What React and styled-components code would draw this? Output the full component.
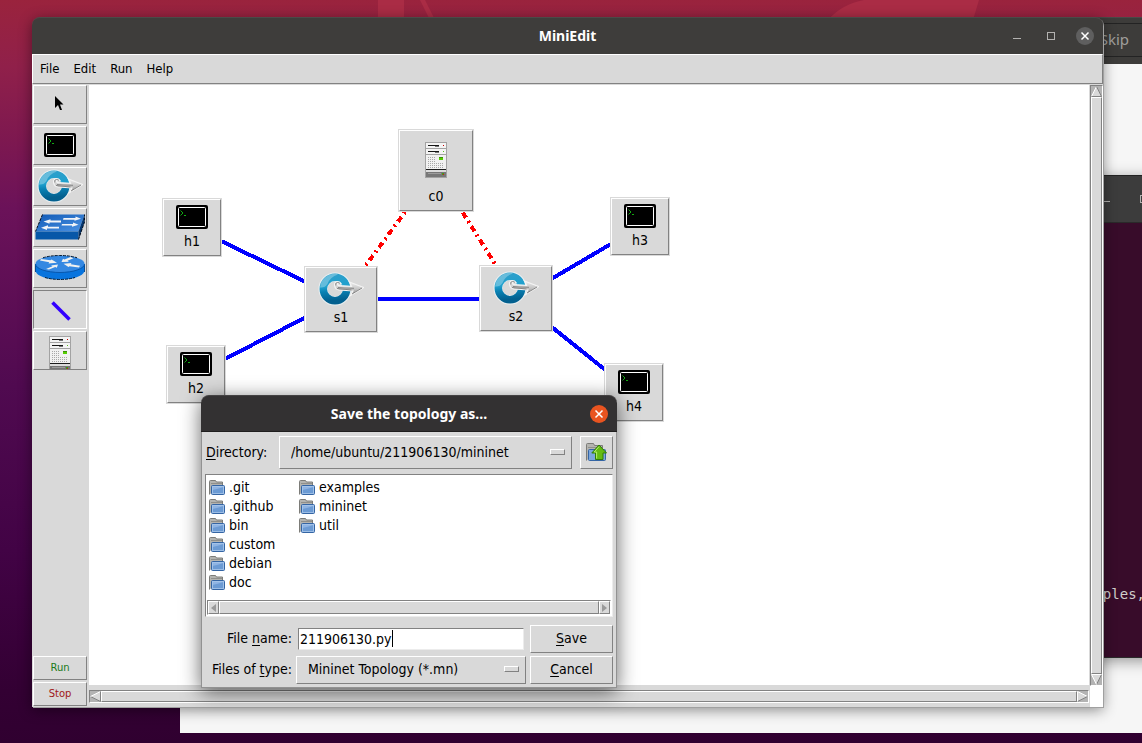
import React from "react";
import styled, { createGlobalStyle, css } from "styled-components";

const face = "#d9d9d9";
const dark = "#828282";
const light = "#ffffff";
const ui = `"DejaVu Sans Condensed", "DejaVu Sans", sans-serif`;
const titleFont = `"Noto Sans", "Open Sans", sans-serif`;

const GlobalStyle = createGlobalStyle`
  *, *::before, *::after { box-sizing: border-box; }
  body { margin: 0; font-family: ${ui}; font-size: 14px; color: #000; }
  button, input, select { font: inherit; color: inherit; margin: 0; padding: 0; border-radius: 0; }
  svg { display: block; }
`;

const raised = css`
  border: 1px solid;
  border-color: ${light} ${dark} ${dark} ${light};
`;
const sunken = css`
  border: 1px solid;
  border-color: ${dark} ${light} ${light} ${dark};
`;

/* ---------- desktop ---------- */

const Desktop = styled.main`
  position: relative;
  min-height: 100vh;
  overflow: hidden;
  background: linear-gradient(180deg, #9a233d 0%, #90204a 9%, #7d1850 19%, #6b1259 28%, #500a50 52%, #420345 74%, #330033 93%, #300030 100%);
`;

const Wallpaper = styled.svg`
  position: absolute;
  top: 0;
  left: 0;
`;

const DesktopWindow = styled.section`
  position: absolute;
  display: flex;
  flex-direction: column;
`;

const BrowserWindow = styled(DesktopWindow)`
  top: 17px;
  left: 180px;
  right: 0;
  bottom: 10px;
  background: #f6f6f6;
`;

const BrowserBar = styled.header`
  display: flex;
  justify-content: flex-end;
  padding: 5px 0 7px;
  background: #3d3c3a;
  border-top: 1px solid #4a4a48;
`;

const SkipButton = styled.button`
  width: 60px;
  height: 34px;
  padding: 0 13px 2px 0;
  border: solid #232323;
  border-width: 1px 0;
  background: #3d3c3a;
  color: #a09f9c;
  font: 15px/30px ${titleFont};
  text-align: right;
`;

const TerminalWindow = styled(DesktopWindow)`
  top: 175px;
  left: 700px;
  right: -40px;
  bottom: 85px;
  background: #380c2a;
  border-bottom: 1px solid #2b2b2b;
  box-shadow: 0 3px 14px rgba(0, 0, 0, 0.4);
`;

const TerminalBar = styled.header`
  display: flex;
  justify-content: flex-end;
  align-items: center;
  gap: 30px;
  height: 48px;
  padding-right: 34px;
  background: #3c3c3c;
  border-top: 1px solid #232323;
  border-bottom: 1px solid #2a2a2a;
`;

const TerminalText = styled.pre`
  margin: auto 37px 53px auto;
  color: #d0cfcc;
  font: 14px/20px "DejaVu Sans Mono", monospace;
`;

/* ---------- window chrome ---------- */

const EditorWindow = styled(DesktopWindow)`
  top: 17px;
  left: 32px;
  right: 39px;
  bottom: 36px;
  border-radius: 8px 8px 0 0;
  box-shadow: 1px 1px 0 #a0a0a0, 0 3px 14px rgba(0, 0, 0, 0.45);
`;

const TitleBar = styled.header`
  display: grid;
  grid-template-columns: 1fr auto 1fr;
  align-items: center;
  height: 37px;
  flex: none;
  padding: 0 9px;
  border-radius: 8px 8px 0 0;
  background: ${(p) => (p.$active ? "#333132" : "#3e3d3b")};
  border-top: 1px solid ${(p) => (p.$active ? "#454344" : "#4b4a48")};
  ${(p) => p.$active && "border-bottom: 1px solid #1f1e1e;"}
`;

const Title = styled.h1`
  grid-column: 2;
  margin: 0;
  color: #fff;
  font: bold 14px/20px ${titleFont};
`;

const Controls = styled.div`
  display: flex;
  justify-content: flex-end;
  align-items: center;
  gap: 16px;
`;

const ControlButton = styled.button`
  display: grid;
  place-items: center;
  width: 18px;
  height: 18px;
  border: 0;
  border-radius: 50%;
  background: ${(p) => p.$fill || "transparent"};
`;

/* ---------- editor ---------- */

const MenuBar = styled.nav`
  display: flex;
  flex: none;
  gap: 2px;
  height: 30px;
  padding: 0 1px;
  background: ${face};
  ${raised}
`;

const MenuItem = styled.button`
  padding: 0 6px;
  border: 0;
  background: none;
  font-size: 13px;
  line-height: 28px;
`;

const EditorBody = styled.div`
  display: flex;
  flex: 1;
  min-height: 0;
  padding-top: 1px;
  background: ${face};
`;

const ToolBar = styled.aside`
  display: flex;
  flex-direction: column;
  gap: 2px;
  width: 57px;
  flex: none;
  padding: 0 2px 1px 1px;
`;

const ToolButton = styled.button`
  display: grid;
  place-items: ${(p) => (p.$clip ? "start center" : "center")};
  height: 39px;
  padding: ${(p) => (p.$clip ? "4px 0 0" : p.$selected ? "2px 0 0 2px" : "0 0 2px")};
  overflow: hidden;
  background: ${face};
  ${(p) => (p.$selected ? sunken : raised)}
`;

const RunButton = styled.button`
  height: 24px;
  background: ${face};
  color: ${(p) => p.$color};
  font: 10px/20px "DejaVu Sans", sans-serif;
  ${raised}
`;

const Spacer = styled.div`
  flex: 1;
`;

const Workspace = styled.div`
  display: flex;
  flex-direction: column;
  flex: 1;
  min-width: 0;
`;

const Canvas = styled.div`
  position: relative;
  flex: 1;
  background: #fff;
  overflow: hidden;
`;

const Links = styled.svg`
  position: absolute;
  top: 0;
  left: 0;
`;

const Node = styled.figure`
  position: absolute;
  left: ${(p) => p.$x}px;
  top: ${(p) => p.$y}px;
  width: ${(p) => p.$w}px;
  height: ${(p) => p.$h}px;
  margin: 0;
  padding-top: ${(p) => p.$pad}px;
  display: flex;
  flex-direction: column;
  align-items: center;
  background: ${face};
  ${raised}
  outline: 1px solid ${face};
`;

const NodeName = styled.figcaption`
  margin-top: ${(p) => p.$gap}px;
  line-height: 16px;
`;

const BottomScroll = styled.div`
  flex: none;
  padding: 5px 0 4px;
`;

const SideScroll = styled.div`
  display: flex;
  flex-direction: column;
  flex: none;
  width: 14px;
  padding: 0 0 21px 1px;
  background: linear-gradient(#fff, #fff) 1px 100% / 13px 21px no-repeat;
`;

const ScrollTrack = styled.div`
  display: flex;
  flex: 1;
  flex-direction: ${(p) => (p.$vertical ? "column" : "row")};
  ${(p) => !p.$vertical && "height: 13px;"}
  background: #b3b3b3;
  ${sunken}
`;

const ScrollThumb = styled.div`
  flex: 1;
  background: ${face};
  ${raised}
`;

const ScrollArrow = styled.button`
  display: grid;
  place-items: center;
  width: 11px;
  height: 11px;
  border: 0;
  background: none;
`;

/* ---------- save dialog ---------- */

const Dialog = styled(DesktopWindow)`
  top: 395px;
  left: 201px;
  width: 416px;
  border-radius: 8px 8px 0 0;
  box-shadow: 0 4px 20px rgba(0, 0, 0, 0.6);
`;

const DialogBody = styled.form`
  padding: 4px 3px 3px;
  background: ${face};
  border: solid #929292;
  border-width: 0 1px 1px;
`;

const DirectoryRow = styled.div`
  display: flex;
  align-items: stretch;
  height: 33px;
  margin-bottom: 5px;
`;

const DirectoryLabel = styled.label`
  width: 74px;
  padding-left: 1px;
  line-height: 32px;
`;

const SelectBox = styled.span`
  position: relative;
  display: flex;
  flex: 1;
  min-width: 0;
  &::after {
    content: "";
    position: absolute;
    right: 7px;
    top: 50%;
    width: 15px;
    height: 6px;
    margin-top: -4px;
    ${raised}
    pointer-events: none;
  }
`;

const Select = styled.select`
  flex: 1;
  min-width: 0;
  padding: 0 0 2px 11px;
  appearance: none;
  background: ${face};
  ${raised}
`;

const UpButton = styled.button`
  display: grid;
  place-items: center;
  width: 33px;
  margin-left: 8px;
  background: ${face};
  ${raised}
`;

const FileBox = styled.div`
  display: flex;
  flex-direction: column;
  height: 143px;
  margin-bottom: 8px;
  padding: 3px 1px 1px;
  background: #fff;
  border: 1px solid;
  border-color: #828282 #ececec #ececec #828282;
`;

const FileList = styled.ul`
  display: grid;
  grid-auto-flow: column;
  grid-template-rows: repeat(6, 19px);
  grid-auto-columns: 90px;
  flex: 1;
  margin: 0;
  padding: 0 0 0 2px;
  list-style: none;
`;

const FileItem = styled.li`
  display: flex;
  align-items: center;
  gap: 4px;
  line-height: 19px;
`;

const ListTrack = styled.div`
  display: flex;
  height: 15px;
  background: ${face};
  ${sunken}
`;

const ListArrow = styled.button`
  display: grid;
  place-items: center;
  width: 11px;
  background: ${face};
  ${raised}
`;

const FieldGrid = styled.div`
  display: grid;
  grid-template-columns: 87px 1fr 83px;
  grid-auto-rows: 28px;
  gap: 3px 4px;
`;

const FieldLabel = styled.label`
  text-align: right;
  white-space: nowrap;
  line-height: 26px;
`;

const NameField = styled.div`
  display: flex;
  align-items: center;
  height: 22px;
  margin: 3px 2px;
  padding: 0 1px 1px;
  background: #fff;
  border: 1px solid;
  border-color: #828282 #ececec #ececec #828282;
`;

const NameInput = styled.input`
  field-sizing: content;
  max-width: 100%;
  border: 0;
  outline: 0;
  background: none;
  line-height: 18px;
`;

const Caret = styled.span`
  width: 1px;
  height: 17px;
  background: #000;
`;

const DialogButton = styled.button`
  background: ${face};
  line-height: 24px;
  padding-bottom: 2px;
  ${raised}
`;

const Mnemonic = styled.span`
  text-decoration: underline;
  text-decoration-thickness: 1px;
  text-underline-offset: 2px;
`;

/* ---------- icons ---------- */

const HostIcon = () => (
  <svg width="32" height="24" viewBox="0 0 32 24">
    <rect width="32" height="24" rx="2" fill="#000" />
    <rect x="2.500" y="2.500" width="27" height="19" rx="1" fill="#000" stroke="#fff" />
    <path d="M4.500 5.500l2.500 2.500-2.500 2.500M8 10.500h2" fill="none" stroke="#12a912" />
  </svg>
);

const OpenFlowIcon = () => (
  <svg width="46" height="34" viewBox="0 0 46 34">
    <defs>
      <linearGradient id="ring" x1="0.2" y1="0" x2="0.3" y2="1">
        <stop offset="0" stopColor="#2b9fcb" />
        <stop offset="0.4" stopColor="#1fa0cd" />
        <stop offset="0.6" stopColor="#0a83b5" />
        <stop offset="1" stopColor="#03608f" />
      </linearGradient>
      <linearGradient id="steel" x1="0" y1="0" x2="0" y2="1">
        <stop offset="0" stopColor="#f2f2f2" />
        <stop offset="0.55" stopColor="#c4c4c4" />
        <stop offset="1" stopColor="#858585" />
      </linearGradient>
    </defs>
    <circle cx="17" cy="17" r="12" fill="none" stroke="#e9eff1" strokeWidth="9" />
    <circle cx="17" cy="17" r="11.700" fill="none" stroke="url(#ring)" strokeWidth="7.500" />
    <path d="M2 15.500A15 15 0 0 1 11 3q6-2 9-.5Q12 5 9.500 12q-2.500 4-7.500 3.500z" fill="#a5d9ec" opacity=".5" />
    <path d="M17 15q-1.500-4.500 2-5.500 3 0 4 2-2-1-3.200 0-.8 1.500 1.700 2.200l12 .6-2-4.300L45.500 15.500l-13 8 2.500-4.500-14-1q-3.500-.5-4-3z" fill="url(#steel)" stroke="#f4f4f4" strokeWidth="1.200" />
    <path d="M17.800 13.500q-.8-3 1.700-3 2 .2 2.500 1M19 16.500l14.500 1.500M34 22l10-6M20 15.500l6 .5 10 .3" fill="none" stroke="#868686" strokeWidth="1" />
  </svg>
);

const SwitchIcon = () => (
  <svg width="50" height="26" viewBox="0 0 50 26">
    <defs>
      <linearGradient id="top" x1="0" y1="0" x2="1" y2="1">
        <stop offset="0" stopColor="#1059b5" />
        <stop offset="1" stopColor="#4c93e4" />
      </linearGradient>
    </defs>
    <path d="M7.500 .5h42L43.500 17.500H.5z" fill="url(#top)" />
    <path d="M.5 17.500h43v8H.5z" fill="#0757a8" />
    <path d="M43.500 17.500L49.500 .5V8l-6 17.500z" fill="#04366f" />
    <path d="M7.500 .5L.5 17.500M43.500 25.500L49.500 8V.5" fill="none" stroke="#020d1d" strokeDasharray="3 1" />
    <g fill="#f2f4f7">
      <path d="M28.500 4h12V2.500l5.500 2.200-6.500 2V5.700H28z" />
      <path d="M26 6.500H15.500V5.200L8.500 7.500l6 2.300V8.500H26z" />
      <path d="M27 10h11V8.500l5.500 2.200-6.500 2v-1.200H26.500z" />
      <path d="M24 12.700H13v-1.500L6 13.800l6 2.200v-1.500h12z" />
    </g>
  </svg>
);

const RouterIcon = () => (
  <svg width="50" height="25" viewBox="0 0 50 25">
    <path d="M.5 9v7C2 21.500 12 24.500 25 24.500s23-3 24.500-8.500V9z" fill="#0874de" />
    <path d="M10 22.500Q17 24.500 25 24.500t15-2" fill="none" stroke="#031a33" strokeDasharray="3 1" />
    <path d="M.5 9v8M49.500 9v8" stroke="#0a4c92" />
    <ellipse cx="25" cy="8.800" rx="24.500" ry="8.300" fill="#3488e2" />
    <path d="M8 2.800Q15 .5 25 .5t17 2.300" fill="none" stroke="#04172c" strokeDasharray="3 1" />
    <path d="M.5 9a24.500 8.500 0 0 0 49 0" fill="none" stroke="#0a58ad" />
    <g fill="#f0f1f0">
      <path d="M6 4l9.500 1.200 1-.8 5.500 3.300-8.500.8.800-1.300L5 5.500z" />
      <path d="M26.500 7l1.500-3.200 1.500.7L35.500 2l3 1.200-6 2.600 1.500 1z" />
      <path d="M44 12.500l-9.500-1.200-1 .8-5-3.300 8-.8-.8 1.300 9.300 1.500z" />
      <path d="M11 14l6.500-2.700-1.500-.8 7-1-1.200 3.300-1.600-.7L14 14.600z" />
    </g>
  </svg>
);

const ServerIcon = () => (
  <svg width="22" height="36" viewBox="0 0 22 36">
    <rect width="22" height="36" fill="#a3a3a3" />
    <rect x="1" y="1" width="20" height="5" fill="#f4f4f4" />
    <rect x="1" y="7" width="20" height="5" fill="#f4f4f4" />
    <rect x="1" y="13" width="20" height="14" fill="#f1f1f1" />
    <rect x="3" y="3" width="11" height="1" fill="#161616" />
    <rect x="10" y="4" width="4" height="1" fill="#777" />
    <rect x="18" y="3" width="1" height="1" fill="#c00" />
    <rect x="3" y="9" width="11" height="1" fill="#161616" />
    <rect x="10" y="10" width="4" height="1" fill="#777" />
    <rect x="18" y="9" width="1" height="1" fill="#5fbe20" />
    <path d="M3 15.500h8M3 17.500h8M3 19.500h8M3 21.500h16M3 23.500h16M3 25.500h16" stroke="#a8a8a8" strokeDasharray="1 1" />
    <rect x="14" y="15" width="4" height="3" fill="#55cf00" />
    <rect x="14" y="15" width="4" height="1" fill="#3c8d0a" />
    <rect x="1" y="27" width="20" height="1" fill="#1d1d1d" />
    <rect x="1" y="28" width="20" height="2" fill="#dcdcdc" />
    <rect x="1" y="30" width="20" height="5" fill="#777" />
    <rect x="3" y="31" width="13" height="1" fill="#9c9c9c" />
    <rect x="17" y="31" width="2" height="2" fill="#3f9e16" />
    <rect x="18" y="32" width="1" height="1" fill="#d11" />
  </svg>
);

const PointerIcon = () => (
  <svg width="12" height="16" viewBox="0 0 12 16">
    <path d="M1 0v12l3-3 2 5h2l-2-5.500h3.500z" fill="#000" />
  </svg>
);

const LinkIcon = () => (
  <svg width="20" height="20" viewBox="0 0 20 20">
    <path d="M1.500 1.500l17 17" stroke="#3300ff" strokeWidth="3.500" />
  </svg>
);

const FolderIcon = () => (
  <svg width="16" height="16" viewBox="0 0 16 16">
    <path d="M.5 14.500V1.500q0-1 1-1h5l1 1.500h6v3" fill="#b4b4b0" stroke="#7c7c78" />
    <path d="M2 3.500h11" stroke="#8f8f8b" />
    <rect x="2.500" y="5.500" width="13" height="9" rx="1" fill="#8fb4e3" stroke="#3465a4" />
    <path d="M3.500 10q5-1 11-3v7h-11z" fill="#6c9bd4" />
    <path d="M3.500 6.500h11v7h-11z" fill="none" stroke="#a9c6ea" strokeWidth=".8" />
  </svg>
);

const UpFolderIcon = () => (
  <svg width="21" height="19" viewBox="0 0 21 19">
    <path d="M.5 17.500V1.500q0-1 1-1h6l1 2h8v3" fill="#b4b4b0" stroke="#7c7c78" />
    <path d="M2 4.500h14" stroke="#8f8f8b" />
    <rect x="2.500" y="6.500" width="17" height="11" rx="1" fill="#7ba6dc" stroke="#3465a4" />
    <path d="M13 2l7.500 8H17v6.500H9.500V10H5.800z" fill="#64bb12" stroke="#2f7d05" />
    <path d="M13 3.700L8.200 9h2.400v6.500" fill="none" stroke="#b6ee6a" />
  </svg>
);

const CloseGlyph = () => (
  <svg width="10" height="10" viewBox="0 0 10 10">
    <path d="M1.500 1.500l7 7M8.500 1.500l-7 7" stroke="#fff" strokeWidth="1.500" />
  </svg>
);

const MinimizeGlyph = () => (
  <svg width="8" height="8" viewBox="0 0 8 8">
    <path d="M0 6.500h8" stroke="#b3b2b0" />
  </svg>
);

const MaximizeGlyph = () => (
  <svg width="8" height="8" viewBox="0 0 8 8">
    <rect x=".5" y=".5" width="7" height="7" fill="none" stroke="#b3b2b0" />
  </svg>
);

const turns = { up: 0, right: 90, down: 180, left: 270 };
const arrowEdges = {
  up: [light, dark, dark],
  right: [light, dark, light],
  down: [dark, light, light],
  left: [dark, light, dark],
};

const BevelArrow = ({ dir }) => {
  const [a, b, c] = arrowEdges[dir];
  return (
    <svg width="11" height="11" viewBox="0 0 11 11">
      <g transform={`rotate(${turns[dir]} 5.500 5.500)`}>
        <path d="M5.500.5l5 10H.5z" fill={face} />
        <path d="M.5 10.500l5-10" stroke={a} />
        <path d="M5.500.5l5 10" stroke={b} />
        <path d="M10.500 10.500H.5" stroke={c} />
      </g>
    </svg>
  );
};

const FlatArrow = ({ dir }) => (
  <svg width="5" height="8" viewBox="0 0 5 8">
    <path d={dir === "left" ? "M5 0v8L0 4z" : "M0 0v8l5-4z"} fill="#9a9a9a" />
  </svg>
);

/* ---------- data ---------- */

const kinds = {
  host: { icon: HostIcon, w: 58, h: 57, pad: 5, gap: 4 },
  switch: { icon: OpenFlowIcon, w: 72, h: 65, pad: 4, gap: 3 },
  controller: { icon: ServerIcon, w: 74, h: 81, pad: 11, gap: 10 },
};

/* port: the point of the canvas where the node's links meet */
const nodes = [
  { name: "c0", kind: "controller", x: 310, y: 45, port: [347, 85] },
  { name: "s1", kind: "switch", x: 216, y: 182, port: [252, 214] },
  { name: "s2", kind: "switch", x: 391, y: 181, port: [428, 214] },
  { name: "h1", kind: "host", x: 74, y: 114, port: [103, 142] },
  { name: "h2", kind: "host", x: 78, y: 261, port: [107, 289] },
  { name: "h3", kind: "host", x: 522, y: 113, port: [551, 142] },
  { name: "h4", kind: "host", x: 516, y: 279, port: [545, 308] },
];

const links = [
  ["h1", "s1"],
  ["h2", "s1"],
  ["s1", "s2"],
  ["s2", "h3"],
  ["s2", "h4"],
  ["s1", "c0", true],
  ["s2", "c0", true],
];

const portOf = (name) => nodes.find((node) => node.name === name).port;

const tools = [
  { name: "Select", icon: PointerIcon },
  { name: "Host", icon: HostIcon },
  { name: "Switch", icon: OpenFlowIcon },
  { name: "Legacy switch", icon: SwitchIcon },
  { name: "Legacy router", icon: RouterIcon },
  { name: "Link", icon: LinkIcon, selected: true },
  { name: "Controller", icon: ServerIcon, clip: true },
];

const folders = [".git", ".github", "bin", "custom", "debian", "doc", "examples", "mininet", "util"];

/* ---------- page ---------- */

function Topology() {
  return (
    <Canvas>
      <Links width="100%" height="100%" shapeRendering="crispEdges">
        {links.map(([from, to, control]) => {
          const [x1, y1] = portOf(from);
          const [x2, y2] = portOf(to);
          return (
            <line
              key={from + to}
              x1={x1}
              y1={y1}
              x2={x2}
              y2={y2}
              stroke={control ? "#ff0000" : "#0000ff"}
              strokeWidth="4"
              strokeDasharray={control ? "6 4 2 4" : undefined}
            />
          );
        })}
      </Links>
      {nodes.map(({ name, kind, x, y }) => {
        const { icon: Icon, w, h, pad, gap } = kinds[kind];
        return (
          <Node key={name} $x={x} $y={y} $w={w} $h={h} $pad={pad}>
            <Icon />
            <NodeName $gap={gap}>{name}</NodeName>
          </Node>
        );
      })}
    </Canvas>
  );
}

function SaveDialog() {
  return (
    <Dialog role="dialog" aria-labelledby="save-title">
      <TitleBar $active>
        <Title as="h2" id="save-title">Save the topology as...</Title>
        <Controls>
          <ControlButton $fill="#e95420" aria-label="Close dialog"><CloseGlyph /></ControlButton>
        </Controls>
      </TitleBar>
      <DialogBody onSubmit={(e) => e.preventDefault()}>
        <DirectoryRow>
          <DirectoryLabel htmlFor="directory"><Mnemonic>D</Mnemonic>irectory:</DirectoryLabel>
          <SelectBox>
            <Select id="directory">
              <option>/home/ubuntu/211906130/mininet</option>
            </Select>
          </SelectBox>
          <UpButton type="button" aria-label="Parent directory"><UpFolderIcon /></UpButton>
        </DirectoryRow>
        <FileBox>
          <FileList>
            {folders.map((name) => (
              <FileItem key={name}><FolderIcon />{name}</FileItem>
            ))}
          </FileList>
          <ListTrack>
            <ListArrow type="button" aria-label="Scroll files left"><FlatArrow dir="left" /></ListArrow>
            <ScrollThumb />
            <ListArrow type="button" aria-label="Scroll files right"><FlatArrow dir="right" /></ListArrow>
          </ListTrack>
        </FileBox>
        <FieldGrid>
          <FieldLabel htmlFor="filename">File <Mnemonic>n</Mnemonic>ame:</FieldLabel>
          <NameField>
            <NameInput id="filename" defaultValue="211906130.py" />
            <Caret />
          </NameField>
          <DialogButton><span><Mnemonic>S</Mnemonic>ave</span></DialogButton>
          <FieldLabel htmlFor="filetype">Files of <Mnemonic>t</Mnemonic>ype:</FieldLabel>
          <SelectBox>
            <Select id="filetype">
              <option>Mininet Topology (*.mn)</option>
            </Select>
          </SelectBox>
          <DialogButton type="button"><span><Mnemonic>C</Mnemonic>ancel</span></DialogButton>
        </FieldGrid>
      </DialogBody>
    </Dialog>
  );
}

export default function App() {
  return (
    <>
      <GlobalStyle />
      <Desktop>
        <Wallpaper width="100%" height="100%">
          <g fill="#aa2c45">
            <path d="M378 0h26v20h-26zM420 0h5l10 20h-5zM864 0h115l-6 20H828Q842 4 864 0z" />
          </g>
        </Wallpaper>

        <BrowserWindow>
          <BrowserBar><SkipButton>Skip</SkipButton></BrowserBar>
        </BrowserWindow>

        <TerminalWindow>
          <TerminalBar><MinimizeGlyph /><MaximizeGlyph /></TerminalBar>
          <TerminalText>ples,</TerminalText>
        </TerminalWindow>

        <EditorWindow>
          <TitleBar>
            <Title>MiniEdit</Title>
            <Controls>
              <ControlButton aria-label="Minimize"><MinimizeGlyph /></ControlButton>
              <ControlButton aria-label="Maximize"><MaximizeGlyph /></ControlButton>
              <ControlButton $fill="#5f5f5f" aria-label="Close"><CloseGlyph /></ControlButton>
            </Controls>
          </TitleBar>
          <MenuBar>
            {["File", "Edit", "Run", "Help"].map((item) => (
              <MenuItem key={item}>{item}</MenuItem>
            ))}
          </MenuBar>
          <EditorBody>
            <ToolBar>
              {tools.map(({ name, icon: Icon, selected, clip }) => (
                <ToolButton key={name} aria-label={name} $selected={selected} $clip={clip}><Icon /></ToolButton>
              ))}
              <Spacer />
              <RunButton $color="#1a7a1a">Run</RunButton>
              <RunButton $color="#a01818">Stop</RunButton>
            </ToolBar>
            <Workspace>
              <Topology />
              <BottomScroll>
                <ScrollTrack>
                  <ScrollArrow aria-label="Scroll left"><BevelArrow dir="left" /></ScrollArrow>
                  <ScrollThumb />
                  <ScrollArrow aria-label="Scroll right"><BevelArrow dir="right" /></ScrollArrow>
                </ScrollTrack>
              </BottomScroll>
            </Workspace>
            <SideScroll>
              <ScrollTrack $vertical>
                <ScrollArrow aria-label="Scroll up"><BevelArrow dir="up" /></ScrollArrow>
                <ScrollThumb />
                <ScrollArrow aria-label="Scroll down"><BevelArrow dir="down" /></ScrollArrow>
              </ScrollTrack>
            </SideScroll>
          </EditorBody>
        </EditorWindow>

        <SaveDialog />
      </Desktop>
    </>
  );
}
